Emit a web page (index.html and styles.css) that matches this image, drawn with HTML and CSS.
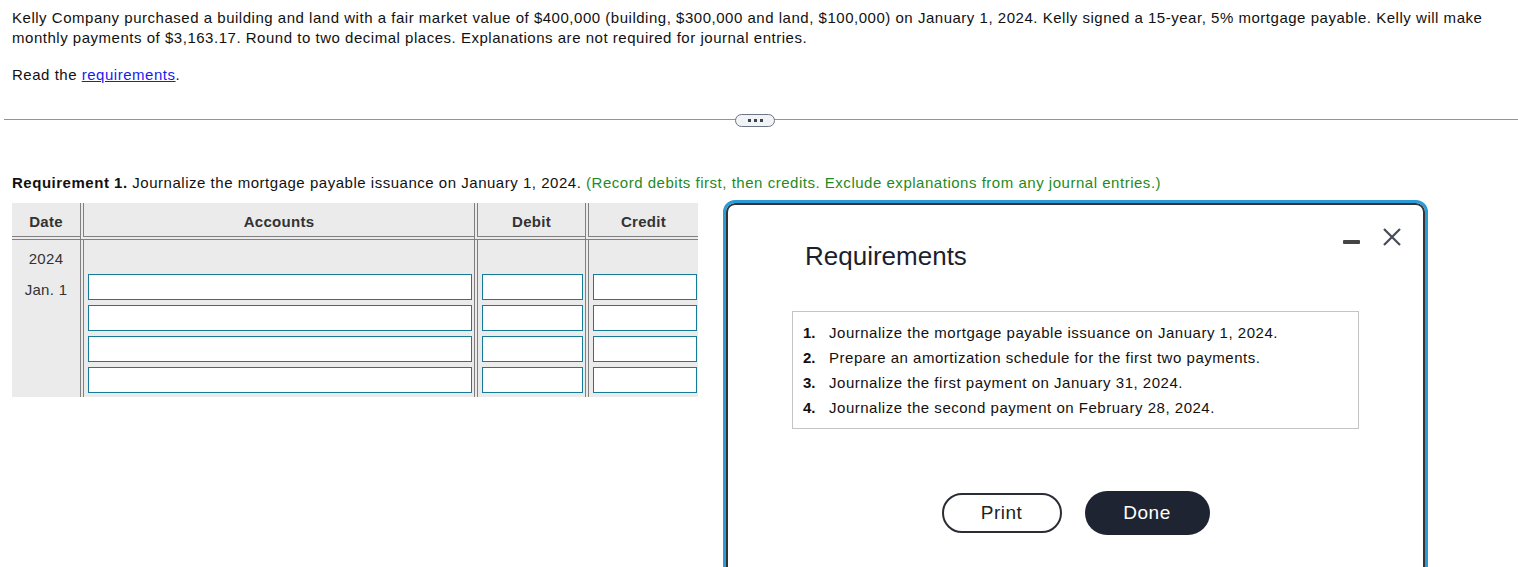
FILE: index.html
```html
<!DOCTYPE html>
<html lang="en">
<head>
<meta charset="utf-8">
<title>Kelly Company mortgage</title>
<link rel="stylesheet" href="styles.css">
</head>
<body>
<div class="page">
  <div class="intro">
    <p class="problem">Kelly Company purchased a building and land with a fair market value of $400,000 (building, $300,000 and land, $100,000) on January 1, 2024. Kelly signed a 15-year, 5% mortgage payable. Kelly will make monthly payments of $3,163.17. Round to two decimal places. Explanations are not required for journal entries.</p>
    <p class="read">Read the <a href="#" class="link">requirements</a>.</p>
  </div>

  <div class="divider">
    <span class="pill"><i></i><i></i><i></i></span>
  </div>

  <div class="work">
    <p class="req"><b>Requirement 1.</b> Journalize the mortgage payable issuance on January 1, 2024. <span class="hint">(Record debits first, then credits. Exclude explanations from any journal entries.)</span></p>

    <table class="journal">
      <thead>
        <tr>
          <th class="c-date">Date</th>
          <th class="c-acct">Accounts</th>
          <th class="c-debit">Debit</th>
          <th class="c-credit">Credit</th>
        </tr>
      </thead>
      <tbody>
        <tr class="yr">
          <td class="c-date">2024</td>
          <td class="c-acct"></td>
          <td class="c-debit"></td>
          <td class="c-credit"></td>
        </tr>
        <tr class="entry">
          <td class="c-date">Jan. 1</td>
          <td class="c-acct"><input type="text" class="field"></td>
          <td class="c-debit"><input type="text" class="field"></td>
          <td class="c-credit"><input type="text" class="field"></td>
        </tr>
        <tr class="entry">
          <td class="c-date"></td>
          <td class="c-acct"><input type="text" class="field"></td>
          <td class="c-debit"><input type="text" class="field"></td>
          <td class="c-credit"><input type="text" class="field"></td>
        </tr>
        <tr class="entry">
          <td class="c-date"></td>
          <td class="c-acct"><input type="text" class="field"></td>
          <td class="c-debit"><input type="text" class="field"></td>
          <td class="c-credit"><input type="text" class="field"></td>
        </tr>
        <tr class="entry last">
          <td class="c-date"></td>
          <td class="c-acct"><input type="text" class="field"></td>
          <td class="c-debit"><input type="text" class="field"></td>
          <td class="c-credit"><input type="text" class="field"></td>
        </tr>
      </tbody>
    </table>
  </div>
</div>

<div class="modal">
  <div class="modal-controls">
    <span class="minimize"></span>
    <svg class="close" width="20" height="18" viewBox="0 0 20 18"><path d="M2 1 L18 17 M18 1 L2 17" stroke="#454b57" stroke-width="2.2" fill="none"/></svg>
  </div>
  <h2 class="modal-title">Requirements</h2>
  <ol class="req-list">
    <li><span class="num">1.</span>Journalize the mortgage payable issuance on January 1, 2024.</li>
    <li><span class="num">2.</span>Prepare an amortization schedule for the first two payments.</li>
    <li><span class="num">3.</span>Journalize the first payment on January 31, 2024.</li>
    <li><span class="num">4.</span>Journalize the second payment on February 28, 2024.</li>
  </ol>
  <div class="modal-actions">
    <button class="btn btn-print">Print</button>
    <button class="btn btn-done">Done</button>
  </div>
</div>
</body>
</html>
```

FILE: styles.css
```css
* { box-sizing: border-box; }

html, body {
  margin: 0;
  padding: 0;
  background: #fff;
  overflow: hidden;
}

body {
  font-family: "Liberation Sans", Arial, sans-serif;
  font-size: 15px;
  letter-spacing: 0.52px;
  color: #111;
  width: 1518px;
  height: 567px;
  position: relative;
}

.page {
  padding: 8px 12px 0 12px;
}

.intro p {
  margin: 0;
  line-height: 20px;
}

.read {
  margin-top: 17px !important;
}

.link {
  color: #1a1aee;
  text-decoration: underline;
}

.divider {
  display: flex;
  align-items: center;
  justify-content: center;
  margin: 28px -12px 0 -8px;
  padding-right: 12px;
  height: 14px;
  background: linear-gradient(#8a94a3, #8a94a3) no-repeat 0 6px / 100% 1px;
}

.pill {
  width: 40px;
  height: 13px;
  border: 1.5px solid #6b7584;
  border-radius: 7px;
  background: #f1f3f6;
  display: flex;
  align-items: center;
  justify-content: center;
  gap: 3px;
}

.pill i {
  width: 3px;
  height: 3px;
  background: #3b4250;
  display: block;
}

.work {
  padding-top: 46px;
}

.req {
  margin: 0;
  line-height: 20px;
}

.hint { color: #1f8a25; }

.journal {
  margin-top: 10px;
  border-collapse: separate;
  border-spacing: 0;
  background: #ebebeb;
  color: #333;
  width: 686px;
}

.journal th {
  height: 37px;
  font-weight: bold;
  font-size: 15px;
  letter-spacing: 0.3px;
  text-align: center;
  vertical-align: middle;
  border-bottom: 4px double #808080;
  padding: 3px 0 0 0;
}

.journal td {
  padding: 0;
  text-align: center;
}

.c-date { width: 68px; }
.c-acct { width: 394px; border-left: 4px double #808080; }
.c-debit { width: 111px; border-left: 4px double #808080; }
.c-credit { width: 113px; border-left: 4px double #808080; }

.journal td.c-date {
  font-size: 15px;
  letter-spacing: 0.3px;
  vertical-align: top;
}

.yr td {
  height: 34px;
  vertical-align: middle !important;
  padding-top: 2px;
}

.entry td {
  padding: 0 2px 5px 4px;
  vertical-align: top;
}

.entry td.c-date {
  padding: 7px 0 0 0;
}

.entry.last td { padding-bottom: 4px; }

.entry td.c-credit { padding-right: 1px; }

.field {
  display: block;
  width: 100%;
  height: 26px;
  border: 1px solid #167a99;
  background: #fff;
  margin: 0;
  padding: 0 4px;
  font: inherit;
  border-radius: 0;
  outline: none;
}

/* Modal */
.modal {
  position: absolute;
  left: 723px;
  top: 200px;
  width: 705px;
  height: 420px;
  border: 3px solid #2c9bd9;
  border-radius: 12px;
  box-shadow: inset 0 0 0 2px #333;
  background: #fff;
  padding: 38px 66px 0 66px;
  letter-spacing: 0;
}

.modal-controls {
  position: absolute;
  top: 25px;
  right: 23px;
  display: flex;
  align-items: center;
  gap: 22px;
}

.minimize {
  display: block;
  width: 17px;
  height: 4px;
  background: #444;
  border-radius: 1px;
  margin-top: 10px;
}

.close { display: block; }

.modal-title {
  margin: 0 0 0 13px;
  font-size: 26px;
  font-weight: normal;
  line-height: 30px;
  color: #1c1f2e;
}

.req-list {
  list-style: none;
  margin: 40px 0 0 0;
  padding: 8px 10px 8px 10px;
  border: 1px solid #c4c4c4;
  color: #111;
  letter-spacing: 0.52px;
}

.req-list li {
  line-height: 25px;
  display: flex;
}

.num {
  font-weight: bold;
  width: 26px;
  flex: none;
  letter-spacing: 0;
}

.modal-actions {
  display: flex;
  justify-content: center;
  align-items: center;
  gap: 23px;
  margin-top: 62px;
}

.btn {
  font-family: "Liberation Sans", Arial, sans-serif;
  font-size: 19px;
  letter-spacing: 0.5px;
  border-radius: 22px;
  cursor: pointer;
  padding: 0;
}

.btn-print {
  width: 120px;
  height: 40px;
  background: #fff;
  color: #222;
  border: 2px solid #2a2d36;
}

.btn-done {
  width: 125px;
  height: 44px;
  background: #1f2433;
  color: #fff;
  border: none;
}
```
